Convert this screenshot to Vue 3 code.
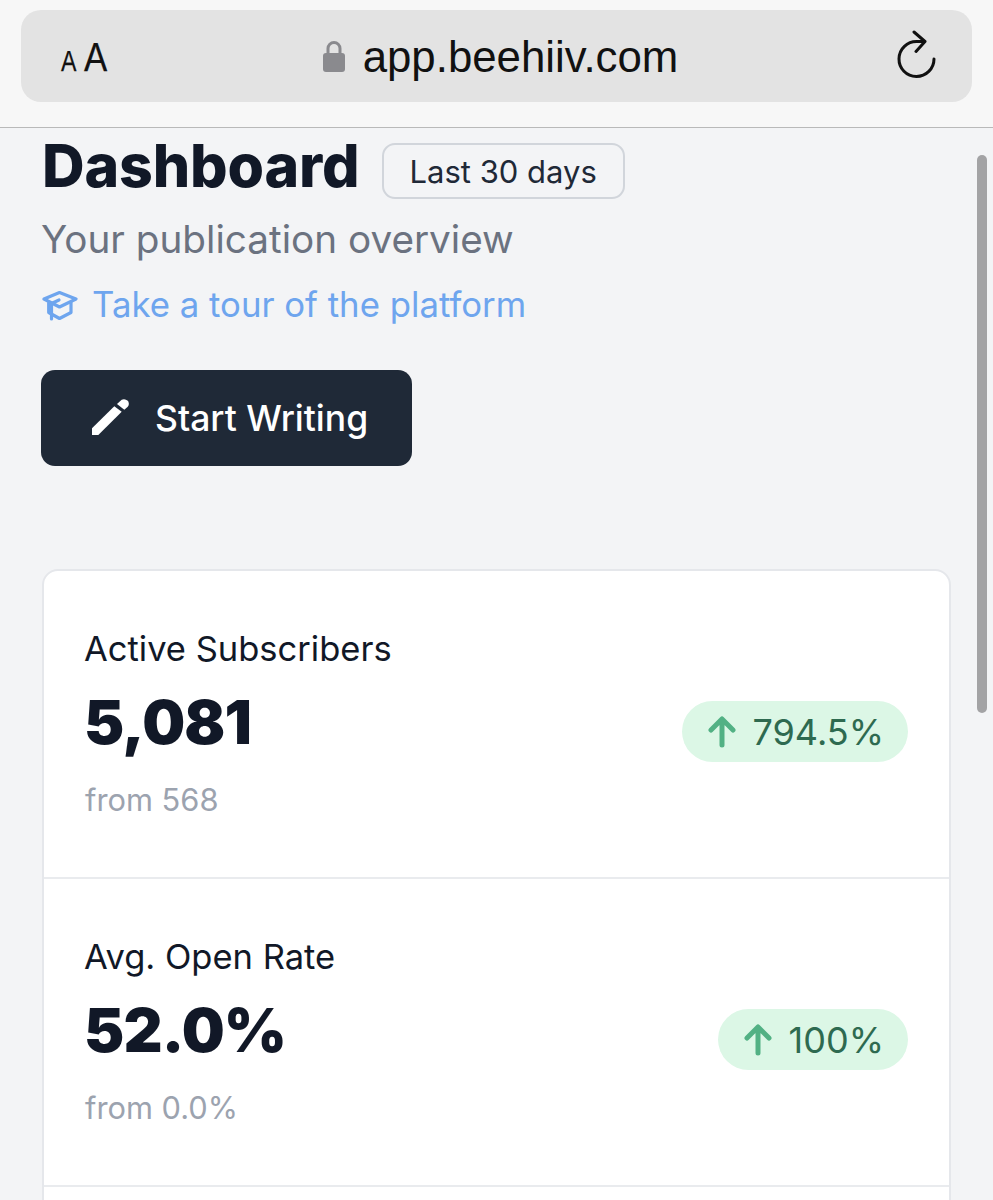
<script setup>
const stats = [
  { label: 'Active Subscribers', value: '5,081', from: 'from 568', change: '794.5%' },
  { label: 'Avg. Open Rate', value: '52.0%', from: 'from 0.0%', change: '100%' },
  { label: '', value: '', from: '', change: '' },
]
</script>

<template>
  <div class="page">
    <header class="browser">
      <div class="urlbar">
        <span class="aa"><span class="small-a">A</span><span class="big-a">A</span></span>
        <span class="address">
          <svg class="lock" viewBox="0 0 24 32" aria-hidden="true">
            <path d="M6 14V8.500a6 6 0 0 1 12 0V14" fill="none" stroke="#8a8a8e" stroke-width="3" />
            <rect x="1" y="13" width="22" height="19" rx="3" fill="#8a8a8e" />
          </svg>
          <span class="host">app.beehiiv.com</span>
        </span>
        <svg class="reload" viewBox="0 0 40 50" aria-hidden="true">
          <path d="M27 11.500H20A17.500 17.500 0 1 0 37 29" fill="none" stroke="#111" stroke-width="3" stroke-linecap="round" />
          <path d="M17 2l11 9.500-9 10" fill="none" stroke="#111" stroke-width="3" stroke-linecap="round" stroke-linejoin="round" />
        </svg>
      </div>
    </header>

    <main class="content">
      <div class="scrollbar"></div>
      <div class="title-row">
        <h1>Dashboard</h1>
        <span class="range">Last 30 days</span>
      </div>
      <p class="subtitle">Your publication overview</p>
      <a class="tour">
        <svg viewBox="0 0 36 30" aria-hidden="true">
          <g fill="none" stroke="#6ea5ee" stroke-width="3.200" stroke-linejoin="round" stroke-linecap="round">
            <path d="M2 8 17.500 1.500 34 8 17.500 16Z" />
            <path d="M6.700 12v9.500l10.800 6L29 21.500V11.500" />
            <path d="M17 9 9.500 12.500V28" />
          </g>
        </svg>
        <span>Take a tour of the platform</span>
      </a>
      <button class="write">
        <svg viewBox="0 0 40 38" aria-hidden="true">
          <path fill="#fff" d="M1 29.300V36H7.300L30.700 12.700 23.300 7.300Z" />
          <path fill="#fff" d="M26 5 30.700 .7C33 -.5 36 .5 37.300 2.500 38.200 4.500 38 6.500 36.500 8L33.300 10.700Z" />
        </svg>
        <span>Start Writing</span>
      </button>

      <section class="card">
        <div v-for="(s, i) in stats" :key="i" class="stat">
          <div v-if="s.label" class="stat-text">
            <div class="label">{{ s.label }}</div>
            <div class="value">{{ s.value }}</div>
            <div class="from">{{ s.from }}</div>
          </div>
          <div v-if="s.change" class="badge">
            <svg viewBox="0 0 28 32" aria-hidden="true">
              <path d="M14 29V4M3 14 14 3l11 11" fill="none" stroke="#52b184" stroke-width="5" stroke-linecap="round" stroke-linejoin="round" />
            </svg>
            <span>{{ s.change }}</span>
          </div>
        </div>
      </section>
    </main>
  </div>
</template>

<style>
html, body { margin: 0; background: #f3f4f6; }
</style>

<style scoped>
.page {
  width: 993px;
  height: 1200px;
  overflow: hidden;
  background: #f3f4f6;
  font-family: Inter, "Liberation Sans", sans-serif;
}
.browser {
  height: 128px;
  box-sizing: border-box;
  padding: 10px 21px 0;
  background: #f7f7f7;
  border-bottom: 1px solid #b9b9b9;
}
.urlbar {
  height: 92px;
  border-radius: 20px;
  background: #e3e3e3;
  display: flex;
  align-items: center;
  justify-content: space-between;
  padding: 0 35px 0 40px;
  color: #111;
  font-family: "Liberation Sans", sans-serif;
}
.aa { display: flex; align-items: baseline; gap: 7px; width: 47px; line-height: 1; margin-top: 2px; -webkit-text-stroke: 0.25px #111; }
.small-a { display: inline-block; font-size: 29px; transform: scaleX(0.8); transform-origin: left; width: 16px; }
.big-a { display: inline-block; font-size: 41px; transform: scaleX(0.85); transform-origin: left; width: 24px; }
.address { display: flex; align-items: center; gap: 17px; margin-left: -5px; }
.lock { width: 24px; height: 32px; margin-top: 1px; }
.host { font-size: 43.800px; line-height: 1; margin-top: 2px; }
.reload { width: 40px; height: 50px; margin-top: -2px; }

.content { position: relative; padding: 0 42px; }
.scrollbar {
  position: absolute;
  right: 6px;
  top: 27px;
  width: 10px;
  height: 558px;
  border-radius: 5px;
  background: #a3a3a5;
}
.title-row { display: flex; align-items: center; gap: 22px; height: 77px; }
h1 {
  margin: -2px 0 0;
  font-size: 59px;
  line-height: 77px;
  font-weight: 800;
  color: #111827;
  letter-spacing: -0.15px;
}
.range {
  box-sizing: border-box;
  height: 56px;
  padding: 0 26px;
  display: flex;
  align-items: center;
  border: 2px solid #d1d5db;
  border-radius: 13px;
  font-size: 31px;
  color: #1f2937;
  margin-top: 9px;
}
.subtitle {
  margin: 6px 0 0 -1px;
  font-size: 38.700px;
  line-height: 56px;
  color: #6b7280;
}
.tour {
  display: flex;
  align-items: center;
  gap: 14px;
  margin-top: 12px;
  color: #6ea5ee;
  font-size: 34.750px;
  line-height: 50px;
}
.tour svg { width: 36px; height: 30px; flex: none; margin-top: 4px; }
.write {
  display: flex;
  align-items: center;
  gap: 24px;
  margin: 41px 0 0 -1px;
  width: 371px;
  height: 96px;
  padding: 0 0 0 50px;
  border: 0;
  border-radius: 14px;
  background: #1f2937;
  color: #fff;
  font: inherit;
  font-size: 35.500px;
  font-weight: 500;
}
.write svg { width: 40px; height: 38px; flex: none; }
.card {
  margin-top: 103px;
  width: 909px;
  box-sizing: border-box;
  background: #fff;
  border: 2px solid #e5e7eb;
  border-radius: 16px;
}
.stat {
  height: 308px;
  box-sizing: border-box;
  padding: 0 41px;
  display: flex;
  align-items: center;
  justify-content: space-between;
  border-bottom: 2px solid #e9ebee;
}
.label { margin-left: -1px; font-size: 34.500px; line-height: 44px; color: #111827; }
.value { margin: 11px 0 0 -1px; font-size: 60.500px; line-height: 80px; font-weight: 900; letter-spacing: -0.8px; color: #111827; }
.from { font-size: 30.800px; line-height: 44px; margin-top: 16px; color: #9ca3af; }
.badge {
  display: flex;
  align-items: center;
  gap: 17px;
  height: 61px;
  margin-top: 15px;
  padding: 0 24px 0 26px;
  border-radius: 31px;
  background: #dcf7e6;
  color: #2e6a50;
  font-size: 36px;
  font-weight: 400;
}
.badge svg { width: 28px; height: 32px; flex: none; }
</style>
